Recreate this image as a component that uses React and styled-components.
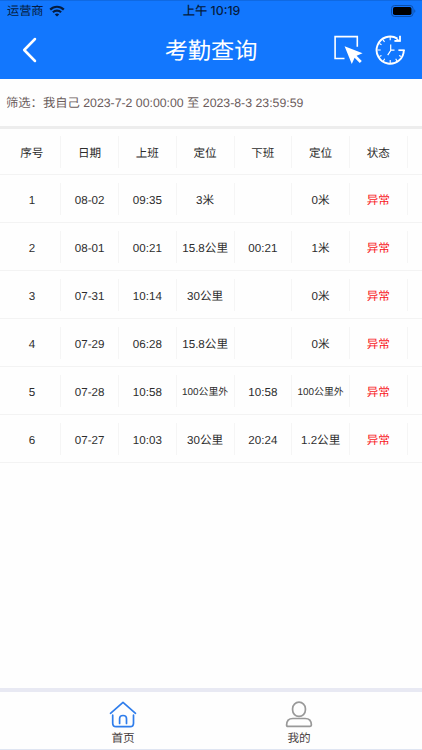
import React from 'react'
import styled, { createGlobalStyle } from 'styled-components'

const GlobalStyle = createGlobalStyle`
  * {
    box-sizing: border-box;
  }
  body {
    margin: 0;
    background-color: #fff;
    font-family: "Liberation Sans", "Noto Sans CJK SC", sans-serif;
    text-rendering: geometricPrecision;
  }
  svg {
    flex-shrink: 0;
  }
`

const Container = styled.div`
  width: 422px;
  height: 750px;
  display: flex;
  flex-direction: column;
  overflow: hidden;
  background-color: #fefefe;
`

const Header = styled.header`
  height: 79px;
  flex-shrink: 0;
  background-color: #1277fe;
  border-top: 1px solid #0f69e2;
`

const StatusBar = styled.div`
  height: 20px;
  display: grid;
  grid-template-columns: 1fr auto 1fr;
  grid-template-rows: 20px;
  align-items: center;
  padding: 0 6px 0 7px;
  color: #051c40;
`

const Carrier = styled.div`
  display: flex;
  align-items: center;
  gap: 5px;
  font-size: 12.2px;
  line-height: 20px;
`

const Time = styled.div`
  font-family: Inter, "Noto Sans CJK SC", sans-serif;
  font-size: 12.3px;
  font-weight: 500;
  line-height: 20px;
`

const BatteryWrap = styled.div`
  display: flex;
  justify-content: flex-end;
`

const NavBar = styled.div`
  height: 58px;
  display: grid;
  grid-template-columns: 88px 1fr 88px;
  grid-template-rows: 58px;
  align-items: center;
`

const Back = styled.div`
  display: flex;
  padding-left: 21px;
`

const Title = styled.h1`
  margin: 0;
  color: white;
  font-size: 23.2px;
  font-weight: 400;
  line-height: 56px;
  padding-top: 2px;
  text-align: center;
`

const Actions = styled.div`
  display: flex;
  align-items: center;
  gap: 11px;
`

const Filter = styled.div`
  height: 47px;
  flex-shrink: 0;
  padding-left: 6px;
  color: #6b5c5c;
  font-size: 12.3px;
  line-height: 49px;
  white-space: nowrap;
`

const Divider = styled.div`
  height: ${(props) => props.$height}px;
  flex-shrink: 0;
  background-color: ${(props) => props.color};
`

const Table = styled.div`
  flex: 1;
`

const Row = styled.div`
  height: ${(props) => (props.$head ? 46 : 48)}px;
  padding-left: 3.5px;
  display: grid;
  grid-template-columns: repeat(7, 57.75px);
  align-items: center;
  border-bottom: 1px solid #f3f3f3;
`

const Cell = styled.div`
  height: 32px;
  border-right: 1px solid #f5f5f5;
  color: ${(props) => (props.$alert ? '#f8161c' : '#2c2c2c')};
  font-size: ${(props) => (props.$small ? 9.9 : 11.6)}px;
  line-height: 35px;
  text-align: center;
  white-space: nowrap;
`

const TabBar = styled.nav`
  height: 58px;
  flex-shrink: 0;
  display: flex;
  padding: 0 35px;
  border-bottom: 1px solid #dfe5f2;
`

const Tab = styled.div`
  flex: 1;
  display: flex;
  flex-direction: column;
  align-items: center;
  padding-top: 8px;
  color: #4a4242;
  font-size: 11.6px;
  line-height: 21px;
`

const WifiIcon = () => (
  <svg width="16" height="12" viewBox="0 0 16 12" fill="none" stroke="#051c40" strokeWidth="2.2">
    <path d="M1.2 4.6C5 .8 11 .8 14.8 4.6" />
    <path d="M3.9 7.2c2.3-2.2 5.9-2.2 8.2 0" />
    <path d="M8 11.6 5.8 9.4c1.2-1.1 3.2-1.1 4.4 0z" fill="#051c40" stroke="none" />
  </svg>
)

const BatteryIcon = () => (
  <svg width="25" height="12" viewBox="0 0 25 12">
    <rect x=".5" y=".5" width="21.5" height="11" rx="3" fill="none" stroke="#0c50ac" />
    <rect x="2" y="2" width="18.5" height="8" rx="1.8" fill="#000" />
    <path d="M23.3 4.2c1.4.4 1.4 3.2 0 3.6z" fill="#0c50ac" />
  </svg>
)

const BackIcon = () => (
  <svg width="18" height="26" viewBox="0 0 18 26" fill="none" stroke="#fff" strokeWidth="2.5" strokeLinecap="round" strokeLinejoin="round">
    <path d="M14 2 3.2 13 14 24" />
  </svg>
)

const SelectIcon = () => (
  <svg width="30" height="30" viewBox="0 0 30 30">
    <path d="M10.5 23.5H1.1V1.6h22.2v10.2" fill="none" stroke="#fff" strokeWidth="1.6" />
    <path d="M10.6 11.2 28.6 18.2 22.6 20.8 27.8 26 25.8 28 20.6 22.8 17.8 28.9z" fill="#fff" />
  </svg>
)

const ClockIcon = () => (
  <svg width="32" height="32" viewBox="0 0 32 32" fill="none" stroke="#fff" strokeWidth="1.9">
    <path d="M28.8 16A13.6 13.6 0 1 1 22.4 4.6" />
    <path d="M23.4 16.2h6.3" strokeWidth="1.7" />
    <path d="M25 1.8v5h-5.6" strokeWidth="1.8" />
    <path d="M25.6 7.6 19.6 7.4 22.4 4.4z" fill="#fff" stroke="none" />
    <path d="M15.7 10.5v6l-3 4.6M15.7 16.2h3.8" strokeWidth="1.2" />
    <path d="M15.2 3v3.2M15.2 26v3.2M2.5 16h3.2M8.2 5.9l1.3 2.1M4.4 9.6l2.1 1.2M4.4 22.6l2.1-1.2M8.4 27l1.3-2.2M22 27l-1.3-2.2M26.2 22.6l-2.1-1.2" strokeWidth="1.1" />
  </svg>
)

const HomeIcon = () => (
  <svg width="28" height="28" viewBox="0 0 28 28" fill="none" stroke="#2f7deb" strokeWidth="1.7" strokeLinecap="round" strokeLinejoin="round">
    <path d="M1.5 13.3 14 2.3l12.5 11" />
    <path d="M3.7 15.2v8c0 2.2 1.2 3.4 3.4 3.4h14c2.2 0 3.4-1.2 3.4-3.4v-8" />
    <path d="M10.6 23.5v-4.7c0-4.4 6.9-4.4 6.9 0v4.7" />
  </svg>
)

const UserIcon = () => (
  <svg width="28" height="28" viewBox="0 0 28 28" fill="none" stroke="#999" strokeWidth="1.7">
    <rect x="7.6" y="2.2" width="12.8" height="14.2" rx="6.4" />
    <path d="M1.6 25.1c0-4.5 2.3-6.6 6.3-6.6h12.2c4 0 6.3 2.1 6.3 6.6 0 .9-.4 1.3-1.3 1.3H2.9c-.9 0-1.3-.4-1.3-1.3z" />
  </svg>
)

const columns = ['序号', '日期', '上班', '定位', '下班', '定位', '状态']

const records = [
  ['1', '08-02', '09:35', '3米', '', '0米', '异常'],
  ['2', '08-01', '00:21', '15.8公里', '00:21', '1米', '异常'],
  ['3', '07-31', '10:14', '30公里', '', '0米', '异常'],
  ['4', '07-29', '06:28', '15.8公里', '', '0米', '异常'],
  ['5', '07-28', '10:58', '100公里外', '10:58', '100公里外', '异常'],
  ['6', '07-27', '10:03', '30公里', '20:24', '1.2公里', '异常'],
]

const App = () => {
  return (
    <>
      <GlobalStyle />
      <Container>
        <Header>
          <StatusBar>
            <Carrier>
              运营商
              <WifiIcon />
            </Carrier>
            <Time>上午 10:19</Time>
            <BatteryWrap>
              <BatteryIcon />
            </BatteryWrap>
          </StatusBar>
          <NavBar>
            <Back>
              <BackIcon />
            </Back>
            <Title>考勤查询</Title>
            <Actions>
              <SelectIcon />
              <ClockIcon />
            </Actions>
          </NavBar>
        </Header>
        <Filter>筛选：我自己 2023-7-2 00:00:00 至 2023-8-3 23:59:59</Filter>
        <Divider color="#ededed" $height={3} />
        <Table>
          <Row $head>
            {columns.map((name, i) => (
              <Cell key={i}>{name}</Cell>
            ))}
          </Row>
          {records.map((record) => (
            <Row key={record[0]}>
              {record.map((value, i) => (
                <Cell key={i} $alert={i === 6} $small={value.endsWith('外')}>
                  {value}
                </Cell>
              ))}
            </Row>
          ))}
        </Table>
        <Divider color="#e8e9f3" $height={4} />
        <TabBar>
          <Tab>
            <HomeIcon />
            首页
          </Tab>
          <Tab>
            <UserIcon />
            我的
          </Tab>
        </TabBar>
      </Container>
    </>
  )
}

export default App
